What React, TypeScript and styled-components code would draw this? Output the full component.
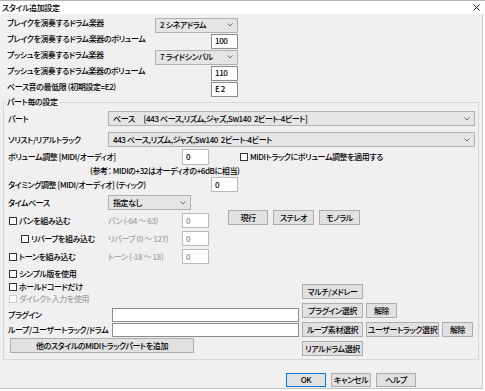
import React from "react";
import styled, { createGlobalStyle } from "styled-components";

const Global = createGlobalStyle`
  html, body { margin: 0; padding: 0; background: #ffffff; }
  body {
    font-family: "Noto Sans CJK JP", "Noto Sans", sans-serif;
    font-size: 8px;
    line-height: 10px;
    letter-spacing: -0.4px;
    font-weight: 500;
    color: #000;
    font-feature-settings: "palt";
  }
  * { box-sizing: border-box; }
`;

const Window = styled.div`
  width: 485px;
  height: 391px;
  background: #ffffff;
  overflow: hidden;
  display: flex;
  flex-direction: column;
`;

const TitleBar = styled.div`
  height: 14px;
  flex: none;
  border-top: 1px solid #b4b4b4;
  background: #ffffff;
  display: flex;
  align-items: center;
  justify-content: space-between;
  padding: 0 5px 0 2px;
`;

const TitleText = styled.span`
  white-space: nowrap;
`;

const Body = styled.div`
  width: 483px;
  height: 375px;
  flex: none;
  background: #f0f0f0;
  border-right: 1px solid #d2d2d2;
  border-bottom: 1px solid #c4c4c4;
  padding-top: 3px;
  display: flex;
  flex-direction: column;
`;

const TopRow = styled.div`
  height: 16px;
  display: flex;
  align-items: center;
  padding-left: 7px;
`;

const TopLabel = styled.span`
  width: 148px;
  flex: none;
  white-space: nowrap;
  padding-bottom: 4px;
`;

const TopControl = styled.div`
  width: 83px;
  display: flex;
  justify-content: flex-end;
`;

const Group = styled.fieldset`
  margin: 0 0 0 3px;
  width: 476px;
  min-width: 0;
  border: 1px solid #d8d8d8;
  padding: 4px 2px 3px 4px;
`;

const Legend = styled.legend`
  padding: 0 1px;
  margin-left: -2px;
  line-height: 10px;
  white-space: nowrap;
`;

const Row = styled.div<{ $h: number; $mt?: number; $align?: string; $pl?: number }>`
  height: ${(p) => p.$h}px;
  margin-top: ${(p) => p.$mt ?? 0}px;
  padding-left: ${(p) => p.$pl ?? 0}px;
  display: flex;
  align-items: ${(p) => p.$align ?? "center"};
`;

const GridRow = styled.div<{ $cols: string; $h: number; $mt?: number }>`
  display: grid;
  grid-template-columns: ${(p) => p.$cols};
  height: ${(p) => p.$h}px;
  margin-top: ${(p) => p.$mt ?? 0}px;
  align-items: center;
`;

const Label = styled.span<{ $w?: number; $disabled?: boolean }>`
  flex: none;
  width: ${(p) => (p.$w ? `${p.$w}px` : "auto")};
  color: ${(p) => (p.$disabled ? "#a3a3a3" : "#000")};
  white-space: nowrap;
  overflow: visible;
`;

const SelectBox = styled.div<{ $w: number }>`
  width: ${(p) => p.$w}px;
  height: 15px;
  flex: none;
  background: #e5e5e5;
  border: 1px solid #b0b0b0;
  display: flex;
  align-items: center;
  padding: 0 4px 0 4px;
`;

const SelectText = styled.span`
  flex: 1;
  white-space: pre;
  overflow: hidden;
`;

const TextBox = styled.div<{ $w: number; $h?: number; $disabled?: boolean; $dark?: boolean }>`
  width: ${(p) => p.$w}px;
  height: ${(p) => p.$h ?? 15}px;
  flex: none;
  background: #ffffff;
  border: 1px solid ${(p) => (p.$dark ? "#8c8c8c" : "#b9b9b9")};
  color: ${(p) => (p.$disabled ? "#8a8a8a" : "#000")};
  display: flex;
  align-items: center;
  padding-left: 3px;
  white-space: nowrap;
  overflow: hidden;
`;

const CheckItem = styled.span<{ $w?: number; $indent?: number; $disabled?: boolean }>`
  flex: none;
  width: ${(p) => (p.$w ? `${p.$w}px` : "auto")};
  padding-left: ${(p) => p.$indent ?? 1}px;
  display: flex;
  align-items: center;
  gap: 2px;
  white-space: nowrap;
  color: ${(p) => (p.$disabled ? "#a3a3a3" : "#000")};
`;

const Box = styled.span<{ $disabled?: boolean }>`
  width: 8px;
  height: 8px;
  flex: none;
  background: #ffffff;
  border: 1px solid ${(p) => (p.$disabled ? "#cccccc" : "#333333")};
`;

const Button = styled.div<{ $w: number; $default?: boolean }>`
  width: ${(p) => p.$w}px;
  height: 15px;
  flex: none;
  background: #e1e1e1;
  border: 1px solid ${(p) => (p.$default ? "#0078d7" : "#adadad")};
  box-shadow: ${(p) => (p.$default ? "inset 0 0 0 1px #e1e1e1" : "none")};
  display: flex;
  align-items: center;
  justify-content: center;
  white-space: nowrap;
`;

const ButtonGroup = styled.div<{ $ml: number }>`
  display: flex;
  gap: 5px;
  margin-left: ${(p) => p.$ml}px;
  align-self: flex-start;
`;

const Lower = styled.div`
  display: flex;
  margin-top: 3px;
`;

const LeftCol = styled.div`
  width: 294px;
  flex: none;
  display: flex;
  flex-direction: column;
`;

const RightCol = styled.div`
  padding-top: 17px;
  display: flex;
  flex-direction: column;
  gap: 4px;
`;

const BtnRow = styled.div`
  display: flex;
  gap: 3px;
`;

const WideButton = styled(Button)`
  margin: 1px 0 0 2px;
`;

const Footer = styled.div`
  display: flex;
  justify-content: flex-end;
  gap: 5px;
  padding-right: 66px;
  margin-top: 13px;
`;

const FooterButton = styled(Button)`
  height: 14px;
`;

const Chevron = () => (
  <svg width="6" height="4" viewBox="0 0 6 4">
    <path d="M0.5 0.5 L3 3 L5.5 0.5" stroke="#5a5a5a" strokeWidth="0.9" fill="none" />
  </svg>
);

const CloseIcon = () => (
  <svg width="7" height="7" viewBox="0 0 7 7">
    <path d="M0.5 0.5 L6.5 6.5 M6.5 0.5 L0.5 6.5" stroke="#222" strokeWidth="1" />
  </svg>
);

const Select = ({ w, text }: { w: number; text: string }) => (
  <SelectBox $w={w}>
    <SelectText>{text}</SelectText>
    <Chevron />
  </SelectBox>
);

const Check = (props: { text: string; w?: number; indent?: number; disabled?: boolean }) => (
  <CheckItem $w={props.w} $indent={props.indent} $disabled={props.disabled}>
    <Box $disabled={props.disabled} />
    {props.text}
  </CheckItem>
);

export default function App() {
  return (
    <>
      <Global />
      <Window>
        <TitleBar>
          <TitleText>スタイル追加設定</TitleText>
          <CloseIcon />
        </TitleBar>
        <Body>
          <TopRow>
            <TopLabel>ブレイクを演奏するドラム楽器</TopLabel>
            <TopControl>
              <Select w={83} text="2 シネアドラム" />
            </TopControl>
          </TopRow>
          <TopRow>
            <TopLabel>ブレイクを演奏するドラム楽器のボリューム</TopLabel>
            <TopControl>
              <TextBox $w={27} $dark>100</TextBox>
            </TopControl>
          </TopRow>
          <TopRow>
            <TopLabel>プッシュを演奏するドラム楽器</TopLabel>
            <TopControl>
              <Select w={83} text="7 ライドシンバル" />
            </TopControl>
          </TopRow>
          <TopRow>
            <TopLabel>プッシュを演奏するドラム楽器のボリューム</TopLabel>
            <TopControl>
              <TextBox $w={27} $dark>110</TextBox>
            </TopControl>
          </TopRow>
          <TopRow>
            <TopLabel>ベース音の最低限 (初期設定=E2)</TopLabel>
            <TopControl>
              <TextBox $w={27} $dark>E 2</TextBox>
            </TopControl>
          </TopRow>

          <Group>
            <Legend>パート毎の設定</Legend>
            <Row $h={15}>
              <Label $w={100}>パート</Label>
              <Select w={367} text={"ベース　 [443 ベース,リズム,ジャズ,Sw140  2ビート-4ビート]"} />
            </Row>
            <Row $h={15} $mt={6}>
              <Label $w={100}>ソリスト/リアルトラック</Label>
              <Select w={367} text={"443 ベース,リズム,ジャズ,Sw140  2ビート-4ビート"} />
            </Row>
            <GridRow $cols="174px 27px 30px auto" $h={16} $mt={2}>
              <Label>ボリューム調整 [MIDI/オーディオ]</Label>
              <TextBox $w={27} $h={16}>0</TextBox>
              <span />
              <Check text="MIDIトラックにボリューム調整を適用する" />
            </GridRow>
            <Row $h={12} $pl={82}>
              <Label>(参考： MIDIの+32はオーディオの+6dBに相当)</Label>
            </Row>
            <Row $h={15}>
              <Label $w={203}>タイミング調整 [MIDI/オーディオ] (ティック)</Label>
              <TextBox $w={27}>0</TextBox>
            </Row>
            <Row $h={15} $mt={3}>
              <Label $w={100}>タイムベース</Label>
              <Select w={83} text="指定なし" />
            </Row>
            <Row $h={18} $align="flex-end">
              <Row $h={15}>
                <Check text="パンを組み込む" w={100} />
                <Label $w={74} $disabled>
                  パン (-64 ～ 63)
                </Label>
                <TextBox $w={27} $disabled>
                  0
                </TextBox>
              </Row>
              <ButtonGroup $ml={19}>
                <Button $w={40}>現行</Button>
                <Button $w={41}>ステレオ</Button>
                <Button $w={41}>モノラル</Button>
              </ButtonGroup>
            </Row>
            <Row $h={15} $mt={3}>
              <Check text="リバーブを組み込む" w={100} indent={13} />
              <Label $w={74} $disabled>
                リバーブ (0 ～ 127)
              </Label>
              <TextBox $w={27} $disabled>
                0
              </TextBox>
            </Row>
            <Row $h={15} $mt={3}>
              <Check text="トーンを組み込む" w={100} />
              <Label $w={74} $disabled>
                トーン (-18 ～ 18)
              </Label>
              <TextBox $w={27} $disabled>
                0
              </TextBox>
            </Row>
            <Lower>
              <LeftCol>
                <Row $h={13}>
                  <Check text="シンプル版を使用" />
                </Row>
                <Row $h={13}>
                  <Check text="ホールドコードだけ" />
                </Row>
                <Row $h={12}>
                  <Check text="ダイレクト入力を使用" disabled />
                </Row>
                <Row $h={14} $mt={3}>
                  <Label $w={104}>プラグイン</Label>
                  <TextBox $w={187} $h={14} $dark />
                </Row>
                <Row $h={14} $mt={1}>
                  <Label $w={104}>ループ/ユーザートラック/ドラム</Label>
                  <TextBox $w={187} $h={14} $dark />
                </Row>
                <WideButton $w={184}>他のスタイルのMIDIトラックパートを追加</WideButton>
              </LeftCol>
              <RightCol>
                <BtnRow>
                  <Button $w={61}>マルチ/メドレー</Button>
                </BtnRow>
                <BtnRow>
                  <Button $w={61}>プラグイン選択</Button>
                  <Button $w={31}>解除</Button>
                </BtnRow>
                <BtnRow>
                  <Button $w={61}>ループ素材選択</Button>
                  <Button $w={73}>ユーザートラック選択</Button>
                  <Button $w={31}>解除</Button>
                </BtnRow>
                <BtnRow>
                  <Button $w={61}>リアルドラム選択</Button>
                </BtnRow>
              </RightCol>
            </Lower>
          </Group>

          <Footer>
            <FooterButton $w={40} $default>
              OK
            </FooterButton>
            <FooterButton $w={40}>キャンセル</FooterButton>
            <FooterButton $w={40}>ヘルプ</FooterButton>
          </Footer>
        </Body>
      </Window>
    </>
  );
}
